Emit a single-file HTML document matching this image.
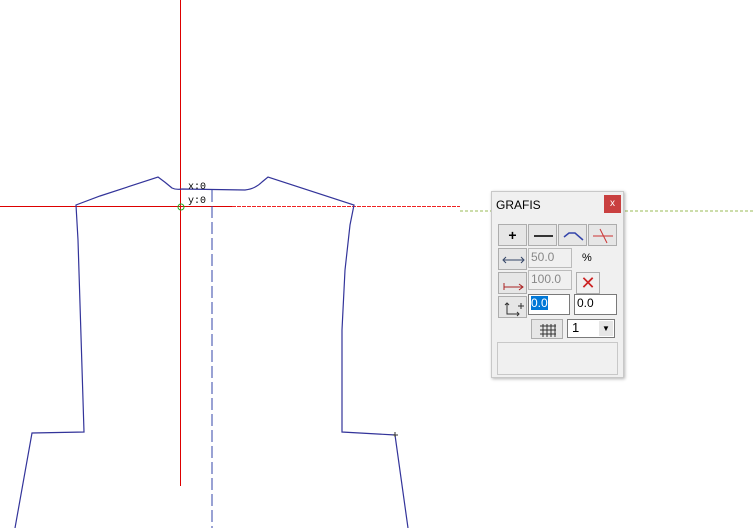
<!DOCTYPE html>
<html><head><style>
body{margin:0;width:753px;height:528px;overflow:hidden;background:#fff;position:relative;font-family:"Liberation Sans",sans-serif}
.dlg{position:absolute;left:491px;top:191px;width:131px;height:185px;background:#f0f0f0;border:1px solid #c8c8c8;box-shadow:1px 1px 3px rgba(0,0,0,.3)}
.b{position:absolute;background:#e6e6e6;border:1px solid #adadad;box-sizing:border-box}
.f{position:absolute;background:#fff;border:1px solid #7a7a7a;box-sizing:border-box;font-size:12px;padding:1px 2px}
</style></head><body>
<svg width="753" height="528" style="position:absolute;left:0;top:0">
<line x1="180.5" y1="0" x2="180.5" y2="486" stroke="#d00" stroke-width="1"/>
<line x1="0" y1="206.5" x2="232" y2="206.5" stroke="#d00"/>
<line x1="232" y1="206.5" x2="460" y2="206.5" stroke="#e22" stroke-dasharray="4,1"/>
<line x1="460" y1="211" x2="753" y2="211" stroke="#9b5" stroke-dasharray="3,2"/>
<line x1="212" y1="190" x2="212" y2="528" stroke="#34a" stroke-dasharray="12,4"/>
<path d="M15 528 L32 433 L84 432 L78 240 L76 205 L100 196 L158 177 Q165 182 172 188 Q176 190 182 189 L245 190 Q255 189 262 182 L268 177 L354 205 L350 225 L345 270 L342 330 L342 432 L395 435 L408 528" fill="none" stroke="#33349a" stroke-width="1.2"/>
<circle cx="181" cy="207" r="3" fill="none" stroke="#2a2"/>
<text x="188" y="189" font-family="Liberation Mono" font-size="10">x:0</text>
<text x="188" y="203" font-family="Liberation Mono" font-size="10">y:0</text>
<path d="M393 435h5M395 432v5" stroke="#333"/>
</svg>
<div class="dlg">
<div style="position:absolute;left:4px;top:6px;font-size:12px">GRAFIS</div>
<div style="position:absolute;left:112px;top:3px;width:17px;height:18px;background:#c94040;color:#fff;font-size:10px;text-align:center;line-height:17px">x</div>
<div class="b" style="left:6px;top:32px;width:29px;height:22px;text-align:center;font-size:14px;font-weight:bold;line-height:20px">+</div>
<div class="b" style="left:36px;top:32px;width:29px;height:22px"><div style="position:absolute;left:5px;top:10px;width:19px;height:2px;background:#333"></div></div>
<div class="b" style="left:66px;top:32px;width:29px;height:22px"><svg width="29" height="22"><path d="M5 12 L10 8 L16 8 L24 15" fill="none" stroke="#34a" stroke-width="1.5"/></svg></div>
<div class="b" style="left:96px;top:32px;width:29px;height:22px"><svg width="29" height="22"><path d="M4 11 H24 M11 4 L18 18" stroke="#c33" fill="none"/></svg></div>
<div class="b" style="left:6px;top:56px;width:29px;height:22px"><svg width="29" height="22"><path d="M5 11H24M7 8L4 11L7 14M22 8L25 11L22 14" stroke="#346" fill="none"/></svg></div>
<div class="f" style="left:36px;top:56px;width:44px;height:20px;color:#888;background:#f0f0f0;border-color:#bbb">50.0</div>
<div style="position:absolute;left:90px;top:60px;font-size:11px">%</div>
<div class="b" style="left:6px;top:80px;width:29px;height:22px"><svg width="29" height="22"><path d="M5 14H24M5 10V17M20 11L24 14L20 17" stroke="#a22" fill="none"/></svg></div>
<div class="f" style="left:36px;top:78px;width:44px;height:20px;color:#888;background:#f0f0f0;border-color:#bbb">100.0</div>
<div class="b" style="left:84px;top:80px;width:24px;height:22px;background:#f0f0f0;color:#c22;font-size:18px;text-align:center;line-height:20px">✕</div>
<div class="b" style="left:6px;top:104px;width:29px;height:22px"><svg width="29" height="22"><path d="M8 6V17H20M6 8L8 6L10 8M18 15L20 17L18 19M22 6V12M19 9H25" stroke="#333" fill="none"/></svg></div>
<div class="f" style="left:36px;top:102px;width:42px;height:21px"><span style="background:#0078d7;color:#fff">0.0</span></div>
<div class="f" style="left:82px;top:102px;width:43px;height:21px">0.0</div>
<div class="b" style="left:39px;top:127px;width:32px;height:20px"><svg width="32" height="20"><path d="M8 6H24M8 10H24M8 14H24M11 4V17M15 4V17M19 4V17M23 4V17" stroke="#333"/></svg></div>
<div class="f" style="left:75px;top:127px;width:48px;height:19px;font-size:13px;padding:0 4px">1<span style="position:absolute;right:1px;top:1px;width:14px;height:15px;background:#e6e6e6;font-size:8px;text-align:center;line-height:15px">▼</span></div>
<div style="position:absolute;left:5px;top:150px;width:119px;height:31px;border:1px solid #c8c8c8"></div>
</div>
</body></html>
